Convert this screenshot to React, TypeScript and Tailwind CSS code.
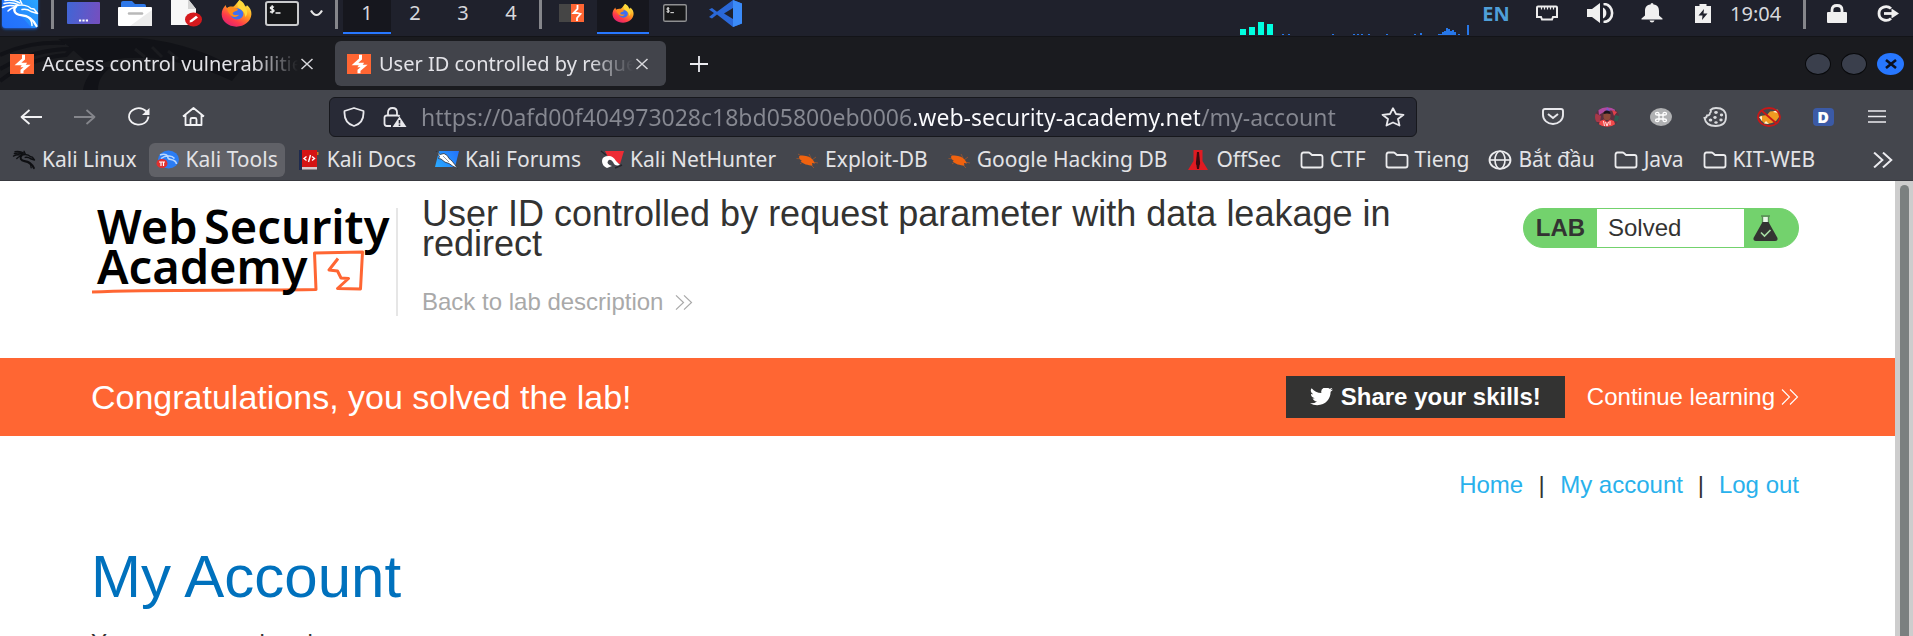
import React from "react";
import type { ReactNode } from "react";

type DrawProps = { w: number; h: number; box?: string; children: ReactNode; className?: string };

function Draw({ w, h, box, children, className = "" }: DrawProps) {
  return (
    <svg
      width={w}
      height={h}
      viewBox={box ?? `0 0 ${w} ${h}`}
      preserveAspectRatio="none"
      fill="none"
      aria-hidden="true"
      className={`shrink-0 ${className}`}
    >
      {children}
    </svg>
  );
}

function DragonPath({ color = "#fff", width = 1.6 }: { color?: string; width?: number }) {
  return (
    <g stroke={color} strokeWidth={width} strokeLinecap="round" strokeLinejoin="round" fill="none">
      <path d="M4 3.500Q11 1.500 18 4.500M2.500 7.500Q9 4 16 6.500M8 11Q12 7 16 7.500M5 0.500Q13 -1 20 3" />
      <path d="M16 6C12.500 10 14.500 14.500 21 15.200C28.500 16 32.500 18.500 36.500 26" strokeWidth={width * 1.5} />
      <path d="M16 6C22 4 28 5.500 31 8.500L34 9L37.500 13.500L31 11.500C27 8.500 24 9 22 9.500" />
      <path d="M28 17C31 19.500 32 22 32 25.500" />
      <path d="M20 0L22 4" />
    </g>
  );
}

function KaliLogo() {
  return (
    <Draw w={42} h={34} className="self-start">
      <defs>
        <filter id="glow" x="-20%" y="-20%" width="140%" height="140%">
          <feGaussianBlur stdDeviation="1.500" />
        </filter>
        <linearGradient id="kaliTile" x1="36" y1="0" x2="4" y2="28" gradientUnits="userSpaceOnUse">
          <stop stopColor="#2aa4ff" />
          <stop offset="0.5" stopColor="#258cfd" />
          <stop offset="0.52" stopColor="#2577fb" />
          <stop offset="1" stopColor="#2270fb" />
        </linearGradient>
      </defs>
      <rect x="2" y="-4" width="36" height="33" rx="4" fill="#1d5fd0" filter="url(#glow)" />
      <rect x="2" y="-4" width="36" height="32" rx="3.500" fill="url(#kaliTile)" />
      <DragonPath width={1.5} />
    </Draw>
  );
}

function Firefox({ w, h }: { w: number; h: number }) {
  return (
    <Draw w={w} h={h} box="0 0 32 32">
      <defs>
        <linearGradient id="foxBody" x1="26" y1="3" x2="8" y2="30" gradientUnits="userSpaceOnUse">
          <stop offset="0" stopColor="#fff04a" />
          <stop offset="0.4" stopColor="#ff9a1f" />
          <stop offset="0.75" stopColor="#ff3b4a" />
          <stop offset="1" stopColor="#e0246e" />
        </linearGradient>
      </defs>
      <path
        d="M19 0C23 2 24 5 25 7.5C26.5 8 26.8 6.8 26.6 6C30 9 31.6 13 31.4 17C31 25.500 24 31.600 16 31.600C7.500 31.600 .7 25.500 .7 17C.7 12.500 2.200 9 5 6C5 8 5.500 9 6.500 9.500C8 8 10 7.500 12.500 8C15 6.500 16.500 3 19 0Z"
        fill="url(#foxBody)"
      />
      <circle cx="16.500" cy="16.500" r="6.600" fill="#3f6ff0" />
      <path d="M6.500 9.500C9 7.700 12 8.200 14 10C17 9.500 18 11 17 12.300C15 13.500 13 13.300 12 15.600C12.500 18.500 16 18 18.500 17.500C17 21 11 21 9 16.500C7 14 6 11.500 6.500 9.500Z" fill="#ff8a1c" />
      <path d="M19 0C23 3 23 6 26 10C28 14 27 18 25 20C25 14 21 12 18 9C16 6 17 3 19 0Z" fill="#ffd83a" />
    </Draw>
  );
}

function Burp({ w, h }: { w: number; h: number }) {
  return (
    <Draw w={w} h={h} box="0 0 24 24">
      <rect width="24" height="24" fill="#ff6633" />
      <path d="M13.500 1V6L8 12H14.500L13 14.500H17L12 19.500V23" stroke="#fff" strokeWidth="3" />
    </Draw>
  );
}

function Terminal({ w, h, stroke }: { w: number; h: number; stroke: string }) {
  return (
    <Draw w={w} h={h} box="0 0 34 26">
      <rect x="1" y="1" width="32" height="24" rx="2" fill="#161719" stroke={stroke} strokeWidth="2" />
      <path d="M9 6.500C7 5.500 5.200 6 5.400 7.400C5.700 9 9 8.400 9 10.200C9 11.600 6.500 11.800 5 11M7.200 4.500V13M10.500 12.500H15.500" stroke="#f0f0f0" strokeWidth="1.400" />
    </Draw>
  );
}

function Folder() {
  return (
    <Draw w={24} h={18} className="text-[#ececee]">
      <path
        d="M1.500 4V14.500Q1.500 16.500 3.500 16.500H20.500Q22.500 16.500 22.500 14.500V6Q22.500 4 20.500 4H12L9.800 2Q9.300 1.500 8.500 1.500H3.500Q1.500 1.500 1.500 4Z"
        stroke="currentColor"
        strokeWidth="1.800"
        strokeLinejoin="round"
      />
    </Draw>
  );
}

function ExploitBug() {
  return (
    <Draw w={24} h={18}>
      <path d="M3 3L7 5.500M1.500 7.500L7 8M5 13L9 10M14 3L16 7M21 6L17 9M23 12L18 11M19 17L15 13" stroke="#8c5334" strokeWidth="1" />
      <path d="M4 5.500C6 4 9 4.500 11 5C15 5.500 18 8 20 12.500L17 12L17.500 14.500C13 14.500 8 13 5.500 10L7 9.500C5 9 4 7.500 4 5.500Z" fill="#f0620f" />
    </Draw>
  );
}

function Close({ color = "#d8d8dc" }: { color?: string }) {
  return (
    <Draw w={14} h={12}>
      <path d="M1.500 1L12.500 11M12.500 1L1.500 11" stroke={color} strokeWidth="1.500" />
    </Draw>
  );
}

function Chevrons({ w, h, width = 1.4 }: { w: number; h: number; width?: number }) {
  return (
    <Draw w={w} h={h} box="0 0 18 16">
      <path d="M1 0.500L8.500 8L1 15.500M9 0.500L16.500 8L9 15.500" stroke="currentColor" strokeWidth={width} />
    </Draw>
  );
}

const Divider = ({ className = "" }: { className?: string }) => (
  <span className={`h-[29px] w-[3px] shrink-0 self-start bg-[#85868b] ${className}`} />
);

function PanelButton({ label, className, children }: { label: string; className: string; children: ReactNode }) {
  return (
    <button type="button" aria-label={label} className={`flex h-full shrink-0 items-center justify-center pb-2.5 ${className}`}>
      {children}
    </button>
  );
}

const netBars: [number, number][] = [
  [0, 1], [6, 1], [50, 1], [71, 1], [75, 1], [79, 1], [86, 1], [104, 1], [132, 1], [138, 2], [156, 1],
  [158, 1], [160, 3], [162, 4], [164, 7], [166, 6], [168, 4], [170, 5], [172, 3], [176, 1], [185, 10],
];

function DesktopPanel() {
  return (
    <header className="flex h-9 shrink-0 items-center overflow-hidden bg-[#1f212c] font-['Noto_Sans',sans-serif] text-xl text-[#d7d8dc]">
      <KaliLogo />
      <Divider className="ml-[9px] mr-1" />
      <PanelButton label="Show desktop" className="w-[51px]">
        <Draw w={33} h={22}>
          <defs>
            <linearGradient id="desk" x1="0" y1="0" x2="33" y2="6" gradientUnits="userSpaceOnUse">
              <stop stopColor="#3f66d6" />
              <stop offset="1" stopColor="#7350c0" />
            </linearGradient>
          </defs>
          <rect width="33" height="22" rx="1" fill="url(#desk)" />
          <path d="M12 18.500H21" stroke="#fff" strokeWidth="1.800" strokeDasharray="2.200 1.200" />
        </Draw>
      </PanelButton>
      <PanelButton label="Files" className="w-[51px]">
        <Draw w={34} h={27}>
          <path d="M3 3Q3 1 5 1H14L17 4H26Q28 4 28 6V12H3Z" fill="#2f78e8" />
          <rect x="0" y="7" width="34" height="19" rx="1" fill="#fff" />
          <path d="M34 10V26H12Z" fill="#ececec" />
          <path d="M11 13.500H24" stroke="#b9b9b9" strokeWidth="2.500" strokeLinecap="round" />
        </Draw>
      </PanelButton>
      <PanelButton label="Text editor" className="w-[51px]">
        <Draw w={32} h={28}>
          <path d="M1 0H18L26 10V26H1Z" fill="#f7f7f7" />
          <path d="M18 0L26 10H18Z" fill="#d4d4d4" />
          <ellipse cx="23.500" cy="20.500" rx="8.500" ry="7" fill="#d5191d" />
          <path d="M19.500 23.500L20.200 21.200L26 16.800L28 18.500L22 23Z" fill="#fff" />
        </Draw>
      </PanelButton>
      <PanelButton label="Firefox" className="w-[51px]">
        <Firefox w={31} h={27} />
      </PanelButton>
      <PanelButton label="Terminal" className="w-[39px]">
        <Terminal w={34} h={25} stroke="#c9cacc" />
      </PanelButton>
      <PanelButton label="More terminals" className="w-[30px]">
        <Draw w={13} h={8}>
          <path d="M1 1.500C3 5 5 6 6.500 6C8 6 10 5 12 1.500" stroke="#e6e6e6" strokeWidth="2.200" />
        </Draw>
      </PanelButton>
      <Divider className="ml-1 mr-[5px]" />
      {["1", "2", "3", "4"].map((n, i) => (
        <button
          key={n}
          type="button"
          className={`flex h-[34px] w-12 shrink-0 items-center justify-center self-start border-b-2 pb-1.5 ${
            i === 0 ? "border-[#2777ff] bg-[#16171e]" : "border-transparent"
          }`}
        >
          {n}
        </button>
      ))}
      <Divider className="mx-1" />
      <PanelButton label="Burp Suite" className="w-[51px]">
        <Draw w={25} h={18}>
          <rect width="12" height="18" fill="#454545" />
          <rect x="12" width="13" height="18" fill="#ff6633" />
          <path d="M18.500 1V5L14.500 9H18L21.500 10L18 14V17" stroke="#fff" strokeWidth="1.800" />
        </Draw>
      </PanelButton>
      <button type="button" aria-label="Firefox window" className="flex h-[34px] w-[52px] shrink-0 items-center justify-center self-start border-b-2 border-[#2777ff] bg-[#16171e] pb-1.5">
        <Firefox w={22} h={19} />
      </button>
      <PanelButton label="Terminal window" className="w-[51px]">
        <Terminal w={24} h={18} stroke="#8f9092" />
      </PanelButton>
      <PanelButton label="Code editor" className="w-[50px]">
        <Draw w={33} h={27}>
          <path d="M24 0L33 3.500V23.500L24 27L8 14.500L3 18.500L0 17L5 13L0 9.500L3 8L8 11.800Z" fill="#2a68d8" />
          <path d="M24 8V19L15 13.500Z" fill="#1f212c" />
          <path d="M24 0L33 3.500V23.500L24 27Z" fill="#3b8bf8" />
        </Draw>
      </PanelButton>

      <div className="ml-auto flex h-[35px] items-end gap-2 self-start pr-[2px]">
        <Draw w={34} h={13}>
          <path d="M0 7H6V13H0ZM9 5H15V13H9ZM18 0H24V13H18ZM27 2H33V13H27Z" fill="#00ffe0" />
        </Draw>
        <Draw w={187} h={10}>
          {netBars.map(([x, h]) => (
            <rect key={x} x={x} y={10 - h} width="2" height={h} fill="#2777e8" />
          ))}
        </Draw>
      </div>
      <span className="w-[50px] shrink-0 pb-2 text-center font-bold text-[#4f9fd8]">EN</span>
      <PanelButton label="Network" className="w-[52px]">
        <Draw w={22} h={16}>
          <path d="M2 1.500H20Q21 1.500 21 2.500V12H17L16 14.500H6L5 12H1V2.500Q1 1.500 2 1.500Z" stroke="#ececec" strokeWidth="2" />
          <path d="M5.500 2V4.500M8.500 2V4.500M11.500 2V4.500M14.500 2V4.500M17.500 2V4.500" stroke="#ececec" strokeWidth="1.200" />
        </Draw>
      </PanelButton>
      <PanelButton label="Volume" className="w-[54px]">
        <Draw w={27} h={20}>
          <path d="M0 6H5L13 0V20L5 14H0Z" fill="#f0f0f0" />
          <path d="M16 4.500C20.500 6.500 20.500 13.500 16 15.500Z" fill="#f0f0f0" />
          <path d="M16.500 1C28 1 28 19 16.500 19" stroke="#f0f0f0" strokeWidth="2.600" />
        </Draw>
      </PanelButton>
      <PanelButton label="Notifications" className="w-[50px]">
        <Draw w={22} h={20}>
          <path d="M11 0Q12.500 0 12.500 1.500C17 2 18 5 18 8V12.500L21.500 15.500V16.500H.5V15.500L4 12.500V8C4 5 5 2 9.500 1.500Q9.500 0 11 0ZM8.500 17.500H13.500Q13 19.500 11 19.500Q9 19.500 8.500 17.500Z" fill="#f0f0f0" />
        </Draw>
      </PanelButton>
      <PanelButton label="Battery" className="w-[52px]">
        <Draw w={16} h={19}>
          <path d="M4.500 0H11.500V2H16V19H0V2H4.500Z" fill="#f0f0f0" />
          <path d="M9 5L3.500 11.500H7.500L7 16L12.500 9.500H8.500Z" fill="#1f212c" />
        </Draw>
      </PanelButton>
      <time className="w-[74px] shrink-0 pb-2 pl-px">19:04</time>
      <Divider className="mr-[5px]" />
      <PanelButton label="Lock screen" className="w-[51px]">
        <Draw w={20} h={19}>
          <path d="M5 9V6Q5 1.500 10 1.500Q15 1.500 15 6V9" stroke="#f0f0f0" strokeWidth="2.800" />
          <rect y="8" width="20" height="11" rx="1" fill="#f0f0f0" />
        </Draw>
      </PanelButton>
      <PanelButton label="Log out of session" className="w-[51px]">
        <Draw w={22} h={17}>
          <path d="M14 3.500C10 0 2 1.500 2 8.500C2 15.500 10 17 14 13.500" stroke="#f0f0f0" strokeWidth="2.800" />
          <path d="M7 8.500H16" stroke="#f0f0f0" strokeWidth="2.800" />
          <path d="M14.500 3.500L22 8.500L14.500 13.500Z" fill="#f0f0f0" />
        </Draw>
      </PanelButton>
    </header>
  );
}

function Tab({ title, active }: { title: string; active?: boolean }) {
  return (
    <div
      className={`relative flex h-[45px] w-[331px] items-center rounded-md pr-[17px] ${
        active ? "bg-[#42444b] pl-3" : "pl-2.5"
      }`}
    >
      <Burp w={24} h={20} />
      <span className="ml-2 flex-1 overflow-hidden whitespace-nowrap text-xl text-[#e3e3e8] [mask-image:linear-gradient(90deg,#000_calc(100%-44px),transparent)]">
        {title}
      </span>
      <button type="button" aria-label={`Close ${title}`} className="ml-0.5">
        <Close />
      </button>
    </div>
  );
}

function TabStrip() {
  return (
    <div className="relative flex h-[54px] shrink-0 items-center border-t border-[#131418] bg-[#1a1b1f] font-['Noto_Sans',sans-serif]">
      <svg width="245" height="53" viewBox="0 0 245 53" fill="none" aria-hidden="true" className="absolute left-0 top-0">
        <path d="M0 18C22 8 40 5 65 6M0 32C25 18 45 12 72 12L66 18C40 20 20 28 0 44" stroke="#111217" strokeWidth="4" />
        <path d="M58 2C75 12 80 22 95 30C110 20 140 18 170 24C195 28 215 36 232 44L240 34C215 18 180 5 140 1H80ZM95 30C88 38 84 46 83 53H98C98 44 102 36 112 30Z" fill="#111217" />
        <path d="M135 12L145 20M152 10L162 20M168 14L178 22" stroke="#1a1b1f" strokeWidth="3" />
      </svg>
      <Tab title="Access control vulnerabilities" />
      <span className="w-1" />
      <Tab title="User ID controlled by request" active />
      <button type="button" aria-label="New tab" className="ml-6">
        <Draw w={18} h={16}>
          <path d="M9 0V16M0 8H18" stroke="#ececf0" strokeWidth="1.800" />
        </Draw>
      </button>
      <div className="ml-auto flex gap-2.5 pr-[9px]">
        <button type="button" aria-label="Minimize" className="h-[22px] w-[26px] rounded-[50%] border border-[#08090b] bg-[#3a3f4c]" />
        <button type="button" aria-label="Maximize" className="h-[22px] w-[26px] rounded-[50%] border border-[#08090b] bg-[#3a3f4c]" />
        <button type="button" aria-label="Close window" className="flex h-[22px] w-[27px] items-center justify-center rounded-[50%] bg-[#2777ff]">
          <Draw w={12} h={10}>
            <path d="M1 1L11 9M11 1L1 9" stroke="#0b1020" strokeWidth="2.600" />
          </Draw>
        </button>
      </div>
    </div>
  );
}

function ToolButton({ label, children }: { label: string; children: ReactNode }) {
  return (
    <button type="button" aria-label={label} className="flex h-10 w-[54px] shrink-0 items-center justify-center">
      {children}
    </button>
  );
}

function NavBar() {
  return (
    <div className="flex h-[51px] shrink-0 items-center bg-[#44464d] pl-1 pr-[9px] pt-0.5 font-['Noto_Sans',sans-serif]">
      <ToolButton label="Back">
        <Draw w={22} h={16}>
          <path d="M22 8H1.500M9.500 1L1.500 8L9.500 15" stroke="#f2f2f4" strokeWidth="1.800" strokeLinejoin="round" />
        </Draw>
      </ToolButton>
      <ToolButton label="Forward">
        <Draw w={22} h={16}>
          <path d="M0 8H20.500M12.500 1L20.500 8L12.500 15" stroke="#85868c" strokeWidth="1.800" strokeLinejoin="round" />
        </Draw>
      </ToolButton>
      <ToolButton label="Reload">
        <Draw w={22} h={19}>
          <path d="M18.500 4.500C11.500 -2 1 2 1 10C1 18.500 18 22 20.500 9.500" stroke="#f2f2f4" strokeWidth="1.800" />
          <path d="M21.500 1V8H14Z" fill="#f2f2f4" />
        </Draw>
      </ToolButton>
      <ToolButton label="Home">
        <Draw w={23} h={19}>
          <path d="M1 9.500L11.500 1L22 9.500M3.500 8V18H8.500V12.500Q8.500 11 10 11H13Q14.500 11 14.500 12.500V18H19.500V8M8.500 18H14.500" stroke="#f2f2f4" strokeWidth="1.800" strokeLinejoin="round" />
        </Draw>
      </ToolButton>
      <div className="ml-[109px] flex h-10 flex-1 items-center rounded-md border border-[#17181d] bg-[#282a36] pl-[13px] pr-[11px]">
        <Draw w={22} h={20}>
          <path d="M11 1L20.500 4C21 12 18 17 11 19C4 17 1 12 1.500 4Z" stroke="#e8e8ec" strokeWidth="1.800" strokeLinejoin="round" />
        </Draw>
        <Draw w={24} h={20} className="ml-[18px]">
          <path d="M5 8V5.500Q5 1 9.500 1Q14 1 14 5.500V8M8 19H4Q1.500 19 1.500 16.500V10.500Q1.500 8.500 4 8.500H14.500Q16 8.500 16.500 9.500" stroke="#e8e8ec" strokeWidth="1.800" />
          <path d="M16.500 9.500L23.500 20H9.500Z" fill="#e8e8ec" />
          <path d="M16.500 13V16.500M16.500 17.500V19" stroke="#282a36" strokeWidth="1.600" />
        </Draw>
        <input
          aria-label="Address"
          readOnly
          value="https://0afd00f404973028c18bd05800eb0006.web-security-academy.net/my-account"
          className="ml-[14px] min-w-0 flex-1 bg-[linear-gradient(90deg,#868891_493px,#fbfbfe_493px,#fbfbfe_779px,#868891_779px)] bg-clip-text text-[23px] leading-8 text-transparent outline-none"
        />
        <button type="button" aria-label="Bookmark this page">
          <Draw w={24} h={20}>
            <path d="M12 1.200L15 7L22.500 7.800L17 12L18.500 18.500L12 15.500L5.500 18.500L7 12L1.500 7.800L9 7Z" stroke="#e8e8ec" strokeWidth="1.800" strokeLinejoin="round" />
          </Draw>
        </button>
      </div>
      <div className="ml-[109px] flex">
        <ToolButton label="Pocket">
          <Draw w={22} h={17}>
            <path d="M3 1H19Q21 1 21 3V7C21 12 16.500 16 11 16C5.500 16 1 12 1 7V3Q1 1 3 1Z" stroke="#e8e8ec" strokeWidth="1.900" />
            <path d="M6 6L11 10L16 6" stroke="#e8e8ec" strokeWidth="2" />
          </Draw>
        </ToolButton>
        <ToolButton label="Profile">
          <Draw w={24} h={20}>
            <defs>
              <clipPath id="avatar">
                <ellipse cx="12" cy="10" rx="12" ry="9.800" />
              </clipPath>
            </defs>
            <g clipPath="url(#avatar)">
              <rect width="24" height="20" fill="#5a3040" />
              <path d="M3 0H20V4L12 3L4 8Z" fill="#b04aa0" />
              <path d="M12 0L15 4L11 5Z" fill="#7a5ad0" />
              <path d="M0 6L6 9L5 15H0Z" fill="#a83848" />
              <path d="M17 3L22 5L19 9Z" fill="#e0404a" />
              <path d="M20 8L24 9V15L19 14Z" fill="#2e5a50" />
              <ellipse cx="12" cy="9" rx="3.600" ry="4.200" fill="#8d4a3a" />
              <path d="M8.500 7Q8.500 3.500 12 3.500Q15.500 3.500 15.500 7L12 6.500Z" fill="#18141c" />
              <path d="M3 20L5 14L9 12.500L12 15L15 12.500L19 14L21 20Z" fill="#f04a4a" />
              <path d="M8.500 14L9.500 19M15 14L15 18M10.500 15L12 19L13.500 15" stroke="#ffe0e0" strokeWidth="1" />
            </g>
          </Draw>
        </ToolButton>
        <ToolButton label="Command extension">
          <Draw w={22} h={18}>
            <ellipse cx="11" cy="9" rx="11" ry="9" fill="#b0b1b3" />
            <path
              d="M9 7H13V11H9ZM9 7H7.300Q5.500 7 5.500 5.700Q5.500 4.400 7.300 4.400Q9 4.400 9 5.700ZM13 7V5.700Q13 4.400 14.700 4.400Q16.500 4.400 16.500 5.700Q16.500 7 14.700 7ZM9 11V12.300Q9 13.600 7.300 13.600Q5.500 13.600 5.500 12.300Q5.500 11 7.300 11ZM13 11H14.700Q16.500 11 16.500 12.300Q16.500 13.600 14.700 13.600Q13 13.600 13 12.300Z"
              stroke="#fff"
              strokeWidth="1.300"
            />
          </Draw>
        </ToolButton>
        <ToolButton label="Cookie editor">
          <Draw w={24} h={20}>
            <path d="M7.500 3Q9.500 1 13 1Q23 1 23 10Q23 19 12.500 19Q3 19 1.500 11Q3.500 11 4 8.500Q7 8.500 7 6Q8.500 5 7.500 3Z" stroke="#d9dadd" strokeWidth="1.800" />
            <g fill="#d9dadd">
              <ellipse cx="13" cy="5.500" rx="1.800" ry="1.400" />
              <ellipse cx="18.500" cy="8" rx="1.700" ry="1.400" />
              <ellipse cx="12" cy="10.500" rx="1.700" ry="1.400" />
              <ellipse cx="7.500" cy="13" rx="1.800" ry="1.500" />
              <ellipse cx="13" cy="15.500" rx="1.700" ry="1.300" />
              <ellipse cx="18" cy="13" rx="1.700" ry="1.400" />
            </g>
          </Draw>
        </ToolButton>
        <ToolButton label="Proxy switcher">
          <Draw w={24} h={20}>
            <path d="M3 9L10 8L13 4.500L18 4L21 2.500L22 10L19 14Q13 18 7 16L4 13Z" fill="#f09a20" />
            <path d="M16 5L20 2.500L21.500 6ZM2 10L5 9V14ZM9 14L12 17L7 16.500Z" fill="#fff3cf" />
            <ellipse cx="12" cy="10" rx="11" ry="9" stroke="#c81818" strokeWidth="1.800" />
            <path d="M4.500 3.500L19.500 16.500" stroke="#c81818" strokeWidth="1.800" />
          </Draw>
        </ToolButton>
        <ToolButton label="D extension">
          <span className="flex h-[18px] w-[21px] items-center justify-center rounded-sm bg-[#3b5aa6] font-['Open_Sans',sans-serif] text-base font-extrabold leading-none text-white">
            D
          </span>
        </ToolButton>
        <ToolButton label="Open application menu">
          <Draw w={18} h={13}>
            <path d="M0 1H18M0 6.500H18M0 12H18" stroke="#ececf0" strokeWidth="1.700" />
          </Draw>
        </ToolButton>
      </div>
    </div>
  );
}

const bookmarks: { label: string; icon: ReactNode; hot?: boolean }[] = [
  {
    label: "Kali Linux",
    icon: (
      <Draw w={24} h={20} box="0 -2 40 31">
        <DragonPath color="#0e0f12" width={2.2} />
      </Draw>
    ),
  },
  {
    label: "Kali Tools",
    hot: true,
    icon: (
      <Draw w={24} h={19}>
        <ellipse cx="12.500" cy="9.500" rx="10.500" ry="9" fill="#2b7df5" />
        <path d="M4 5Q9 3 12 6Q11 9 15 9.500Q20 10.500 20.500 14M5 8.500Q8 6 12 6Q16 5.500 18.500 8.500" stroke="#b9d8ff" strokeWidth="1.600" />
        <ellipse cx="6" cy="13.500" rx="5.500" ry="4.500" fill="#e0302f" />
        <path d="M3 12H9M5 12V16M7.500 12V16" stroke="#fff" strokeWidth="1.200" />
      </Draw>
    ),
  },
  {
    label: "Kali Docs",
    icon: (
      <Draw w={24} h={20}>
        <path d="M3 0H20V17H3Z" fill="#d41414" />
        <path d="M2 0H5V20H2Z" fill="#1f2b4e" />
        <path d="M5 17H20V19.500H5Z" fill="#d9c9cb" />
        <path d="M20 2H21.500V5H20Z" fill="#d07a20" />
        <path d="M9.500 6.500L7 8.500L9.500 10.500M15 6.500L17.500 8.500L15 10.500M13.500 5L11.500 12" stroke="#fff" strokeWidth="1.400" />
      </Draw>
    ),
  },
  {
    label: "Kali Forums",
    icon: (
      <Draw w={24} h={19}>
        <defs>
          <linearGradient id="forum" x1="2" y1="17" x2="24" y2="1" gradientUnits="userSpaceOnUse">
            <stop stopColor="#2aa8ff" />
            <stop offset="1" stopColor="#2372fb" />
          </linearGradient>
        </defs>
        <path d="M4 1H24L20 17H0Z" fill="url(#forum)" />
        <path d="M1 1L5 4.500L9 3.500Q13 5 14 8.500Q17 10 22.500 18.500Q17 16 14 13.500Q10 13 6 9L3.500 8.500L4.500 6.500Z" fill="#fff" stroke="#2b3038" strokeWidth=".8" />
        <path d="M8 6L14 12" stroke="#6b7078" strokeWidth=".7" />
      </Draw>
    ),
  },
  {
    label: "Kali NetHunter",
    icon: (
      <Draw w={24} h={19}>
        <path d="M5 1H24L20 14L9 9Z" fill="#ee2c35" />
        <path d="M2 11Q2 6 9 6Q13 6 16 11L20 15Q15 17 13 12Q10 8 8 11Q6 14 12 16L7 18Q2 16 2 11Z" fill="#fff" />
        <path d="M1 1L6 5M22 15L15 18" stroke="#24252b" strokeWidth="1.500" />
      </Draw>
    ),
  },
  { label: "Exploit-DB", icon: <ExploitBug /> },
  { label: "Google Hacking DB", icon: <ExploitBug /> },
  {
    label: "OffSec",
    icon: (
      <Draw w={24} h={20}>
        <path d="M7.500 0H16.500V11L22 20H2L7.500 11Z" fill="#e01b22" />
        <path d="M11 2H13L14 12L13 19H11L10 12Z" fill="#3c0b10" />
        <circle cx="12" cy="13" r="2.200" fill="#3c0b10" />
      </Draw>
    ),
  },
  { label: "CTF", icon: <Folder /> },
  { label: "Tieng", icon: <Folder /> },
  {
    label: "Bắt đầu",
    icon: (
      <Draw w={24} h={20}>
        <ellipse cx="12" cy="10" rx="10.500" ry="8.800" stroke="#ececee" strokeWidth="1.800" />
        <ellipse cx="12" cy="10" rx="5" ry="8.800" stroke="#ececee" strokeWidth="1.600" />
        <path d="M1.500 10H22.500" stroke="#ececee" strokeWidth="1.600" />
      </Draw>
    ),
  },
  { label: "Java", icon: <Folder /> },
  { label: "KIT-WEB", icon: <Folder /> },
];

function Bookmarks() {
  return (
    <nav className="flex h-10 shrink-0 items-center gap-[5px] border-b border-[#38393f] bg-[#44464d] pb-0.5 pl-[5px] pr-5 font-['Noto_Sans',sans-serif] text-[21px] text-[#e3e3e6]">
      {bookmarks.map((b) => (
        <a
          key={b.label}
          href="#"
          className={`flex h-[34px] shrink-0 items-center gap-1.5 rounded-md px-[7px] leading-none whitespace-nowrap ${
            b.hot ? "bg-[#606167]" : ""
          }`}
        >
          {b.icon}
          {b.label}
        </a>
      ))}
      <button type="button" aria-label="More bookmarks" className="ml-auto text-[#ececf0]">
        <Chevrons w={20} h={16} width={1.8} />
      </button>
    </nav>
  );
}

function AcademyLogo() {
  return (
    <svg width="300" height="96" viewBox="0 0 300 96" fill="none" role="img" aria-label="Web Security Academy" className="mt-[25px] shrink-0">
      <path d="M0 86C60 83 150 85 224 83.500L222.500 47L270.500 46L268.500 83L245.500 82.500L256.500 72.500L249 72L245.500 65L237 64L246 52.500" stroke="#ff6633" strokeWidth="3" strokeLinejoin="round" />
      <g fill="#000" fontFamily="Noto Sans" fontWeight="600" fontSize="47">
        <text x="5" y="38">Web</text>
        <text x="112" y="38">Security</text>
        <text x="5" y="78">Academy</text>
      </g>
    </svg>
  );
}

function LabStatus() {
  return (
    <div className="mt-[27px] flex h-10 shrink-0 items-stretch overflow-hidden rounded-full border border-[#73d26d] bg-[#73d26d] text-2xl leading-[38px] text-[#333332]">
      <span className="flex w-[73px] items-center justify-center font-bold">LAB</span>
      <p className="w-[147px] bg-white pl-[11px]">Solved</p>
      <span className="flex w-[54px] items-center pl-[9px]">
        <Draw w={25} h={26}>
          <path d="M9.500 2H15.500V9H9.500Z" fill="#eaf7e9" />
          <path d="M8 1H17M9.500 1V8M15.500 1V8" stroke="#5a8d56" strokeWidth="1.400" />
          <path d="M9.500 7H15.500L24.500 23Q25 26 22 26H3Q0 26 .5 23Z" fill="#333332" />
          <path d="M8 17.500L11.500 21L17.500 15" stroke="#a7dca4" strokeWidth="1.600" />
        </Draw>
      </span>
    </div>
  );
}

function LabPage() {
  return (
    <main className="flex-1 overflow-hidden bg-white font-['Liberation_Sans',Arial,sans-serif] text-2xl leading-7">
      <section className="flex h-[177px] items-start pl-[92px] pr-24">
        <AcademyLogo />
        <span className="ml-1 mt-[27px] h-[108px] w-0.5 bg-[#e6e6e6]" />
        <div className="ml-6 mt-[18px] max-w-[1000px] flex-1 text-[#333332]">
          <h1 className="text-4xl leading-[30px]">
            User ID controlled by request parameter with data leakage in redirect
          </h1>
          <a href="#" className="mt-[29px] flex items-center gap-3 text-[#a9a9a9]">
            Back to lab description
            <Chevrons w={18} h={15} width={1.2} />
          </a>
        </div>
        <div className="ml-auto">
          <LabStatus />
        </div>
      </section>
      <section className="flex h-[78px] items-center bg-[#ff6633] pl-[91px] pr-24 text-white">
        <p className="flex-1 text-[34px]">Congratulations, you solved the lab!</p>
        <button type="button" className="flex h-[42px] items-center gap-2 bg-[#333332] px-6 font-bold">
          <Draw w={23} h={18} box="0 3 24 19.500">
            <path
              d="M24 4.600a10 10 0 0 1-2.800.8 5 5 0 0 0 2.200-2.700 10 10 0 0 1-3.100 1.200 4.900 4.900 0 0 0-8.400 4.500A14 14 0 0 1 1.700 3.200a4.900 4.900 0 0 0 1.500 6.600 5 5 0 0 1-2.200-.6v.1a4.900 4.900 0 0 0 3.900 4.800 5 5 0 0 1-2.200.1 4.900 4.900 0 0 0 4.600 3.400A9.900 9.900 0 0 1 0 19.500a14 14 0 0 0 7.500 2.200c9.100 0 14-7.500 14-14v-.6A10 10 0 0 0 24 4.600z"
              fill="#fff"
            />
          </Draw>
          Share your skills!
        </button>
        <a href="#" className="ml-[22px] flex items-center gap-1.5">
          Continue learning
          <Chevrons w={18} h={16} width={1.1} />
        </a>
      </section>
      <section className="pl-[91px] pr-24 pt-[35px]">
        <nav className="flex justify-end text-[#29b1ec]">
          <a href="#">Home</a>
          <span className="w-[37px] text-center text-[#333332]">|</span>
          <a href="#">My account</a>
          <span className="w-9 text-center text-[#333332]">|</span>
          <a href="#">Log out</a>
        </nav>
        <h2 className="mt-11 text-[60px] leading-[68px] text-[#0071bd]">My Account</h2>
        <p className="mt-[18px] text-[#333332]">Your username is: wiener</p>
      </section>
    </main>
  );
}

export default function App() {
  return (
    <div className="flex h-screen flex-col overflow-hidden bg-white">
      <DesktopPanel />
      <TabStrip />
      <NavBar />
      <Bookmarks />
      <div className="flex min-h-0 flex-1">
        <LabPage />
        <div className="flex w-[18px] shrink-0 justify-center bg-[#cdcdcd] pt-1">
          <span className="h-full w-[9px] rounded-t-full bg-[#7b8080]" />
        </div>
      </div>
    </div>
  );
}
